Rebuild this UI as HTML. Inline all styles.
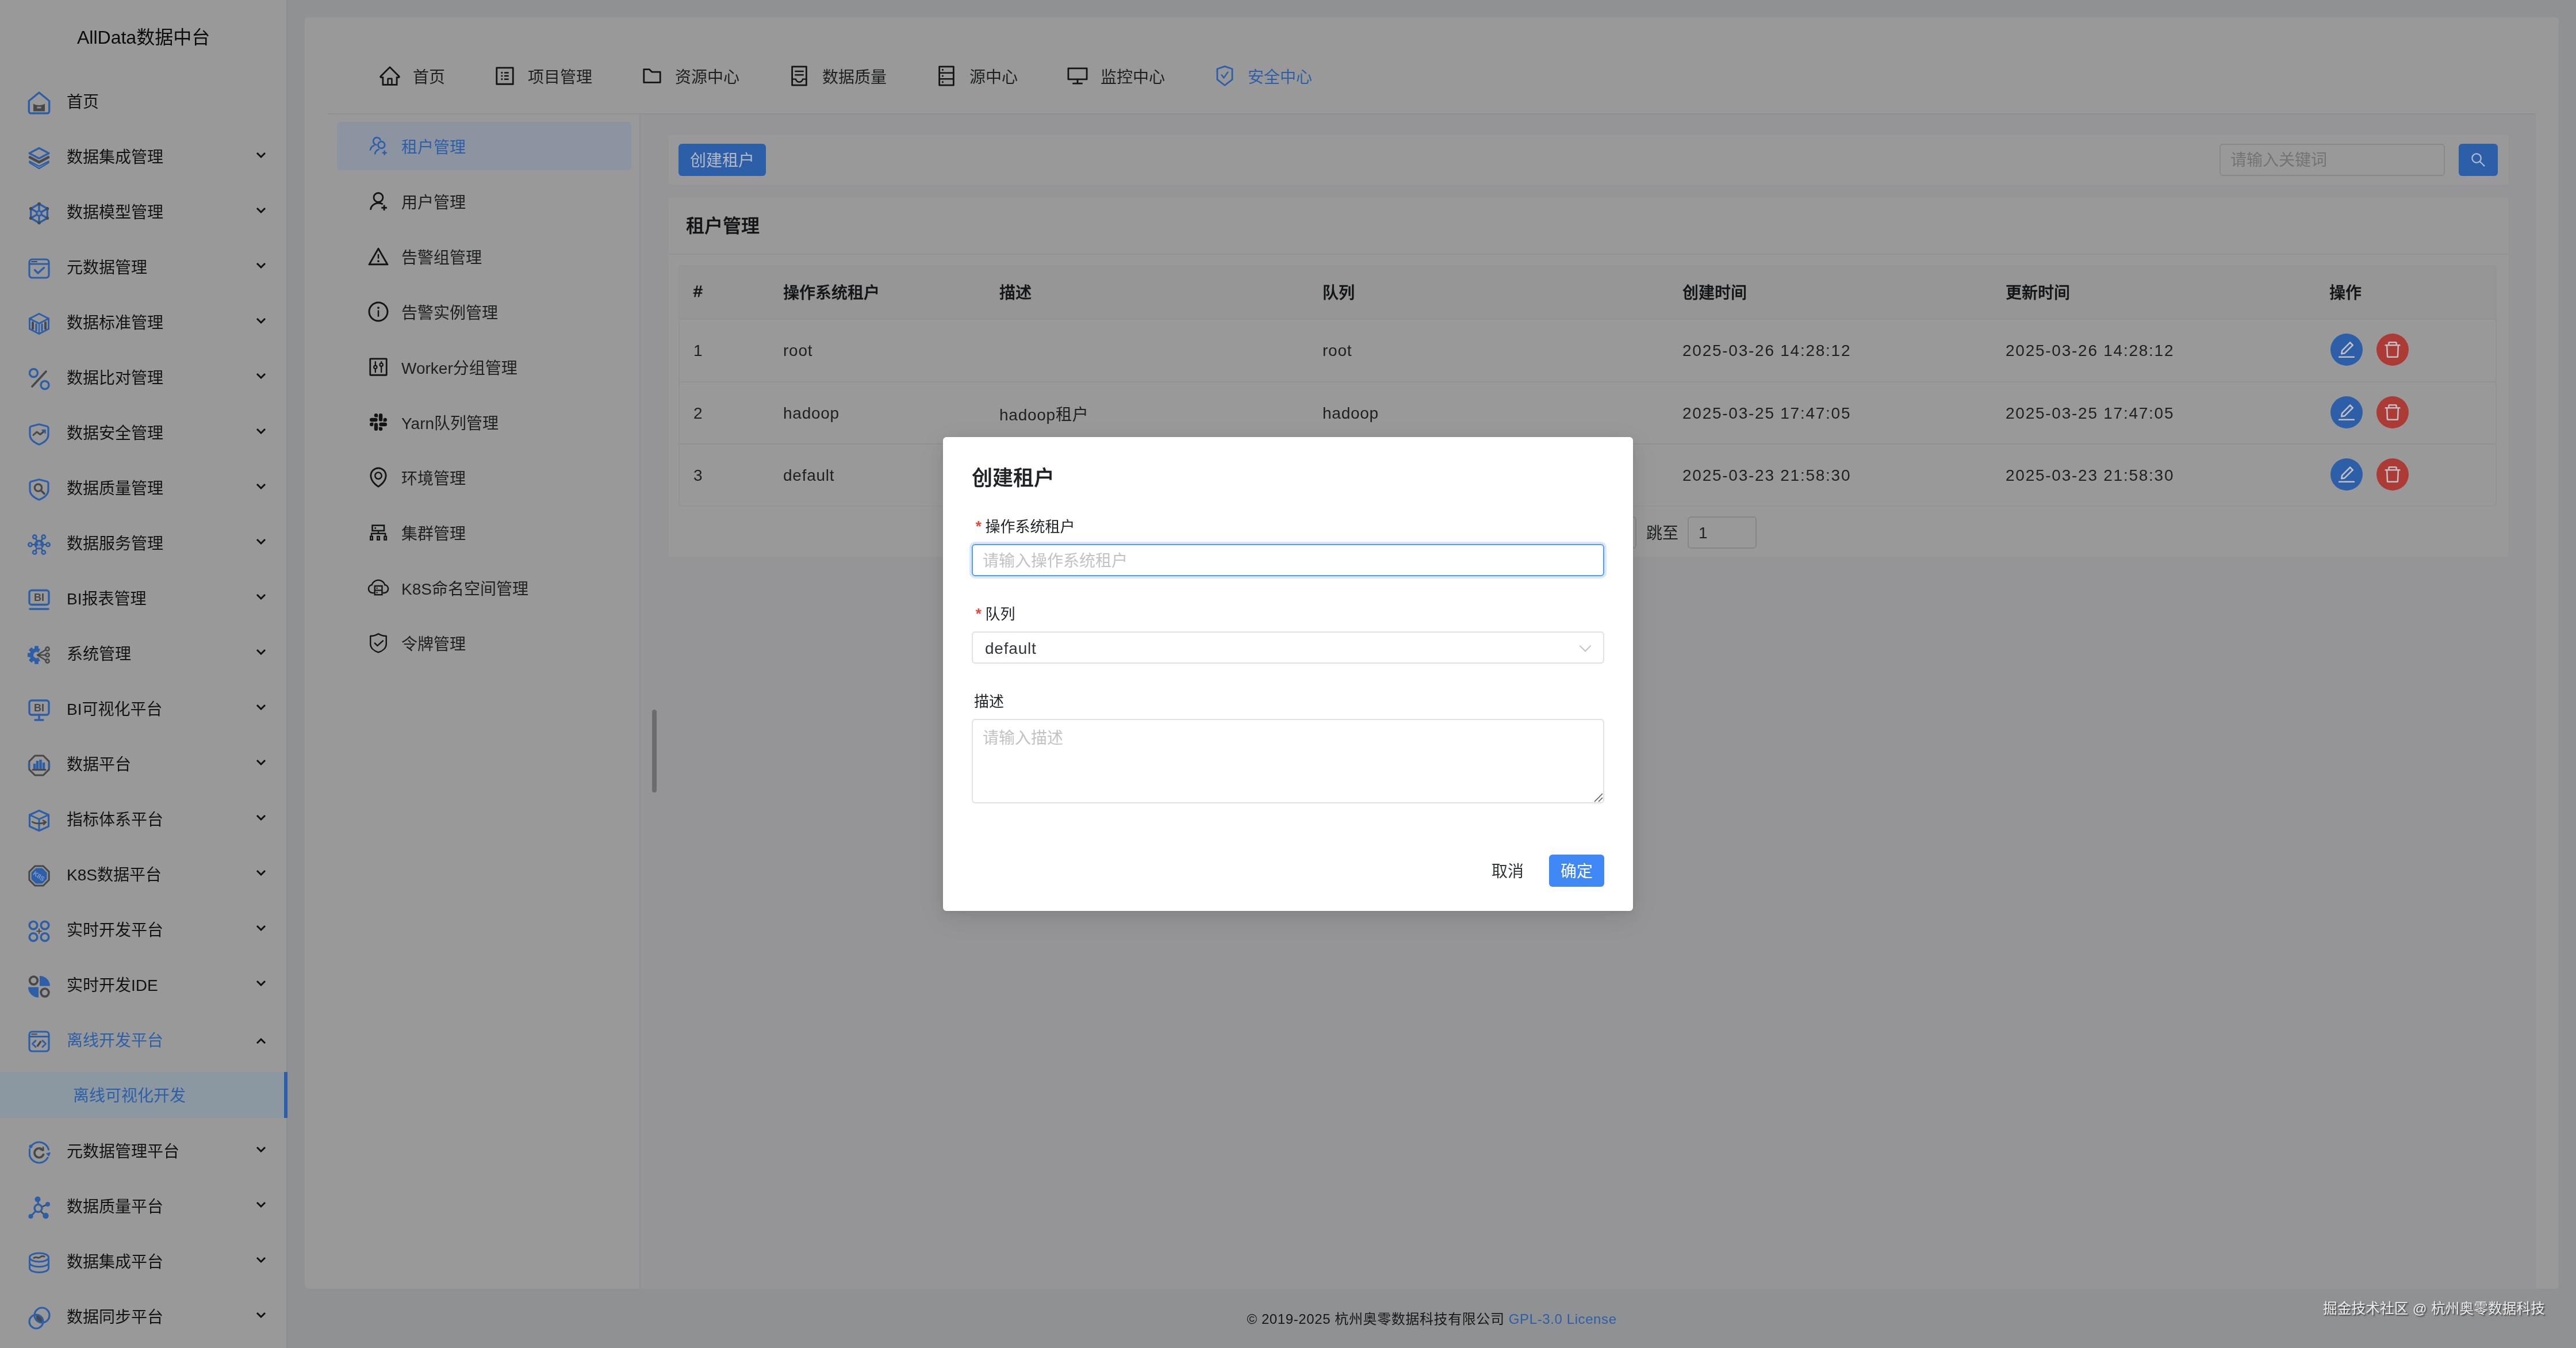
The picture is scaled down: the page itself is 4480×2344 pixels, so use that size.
<!DOCTYPE html>
<html lang="zh-CN"><head><meta charset="utf-8"><title>AllData数据中台</title><style>
*{box-sizing:border-box;margin:0;padding:0}
html,body{width:4480px;height:2344px;overflow:hidden}
body{background:#f0f2f5;font-family:"Liberation Sans","Noto Sans CJK SC",sans-serif;font-size:28px;color:#333639;position:relative}
#side{position:absolute;left:0;top:0;width:500px;height:2344px;background:#fff;border-right:2px solid #ececec}
#logo{position:absolute;left:0;top:0;width:500px;height:128px;line-height:130px;text-align:center;font-size:32px;color:#111}
.mi{position:absolute;left:0;width:500px;height:80px;line-height:84px;font-size:28px;color:rgba(0,0,0,.88);white-space:nowrap}
.mi .ic{position:absolute;left:48px;top:23px;width:40px;height:40px;z-index:5}
.mi span{position:absolute;left:116px;top:0}
.mi .arr{position:absolute;left:444px;top:31px;width:20px;height:14px}
.mi.open span,.mi.sel span{color:#2c5fa8;z-index:5}
.mi.sel{background:#8c98a1;z-index:5}
.mi.sel:after{content:"";position:absolute;right:0;top:0;width:6px;height:80px;background:#2c5fa8;z-index:5}
.mi.sel span{left:127px}
#card{position:absolute;left:530px;top:30px;width:3920px;height:2211px;background:#fff;border-radius:6px;overflow:hidden}
#nav{position:absolute;left:40px;top:40px;width:3840px;height:129px;border-bottom:2px solid #efeff5}
.ni{position:absolute;top:0;height:127px;line-height:129px;font-size:28px;color:#333639;white-space:nowrap}
.ni .ai{position:absolute;left:0;top:42px;width:40px;height:40px;color:#1f2225}
.ni span{position:absolute;left:60px;top:0}
.ni.act{z-index:5;color:#2c5fa8}
.ni.act .ai{color:#2c5fa8}
#subside{position:absolute;left:40px;top:169px;width:544px;height:2100px;border-right:2px solid #efeff5;background:#fff}
.si{position:absolute;left:16px;width:512px;height:84px;line-height:90px;font-size:28px;color:#333639;border-radius:6px;white-space:nowrap}
.si .ai{position:absolute;left:52px;top:22px;width:40px;height:40px;color:#1f2225}
.si span{position:absolute;left:112px;top:0}
.si.act{background:#8d94a1;z-index:5}
.si.act span,.si.act .ai{color:#2c5fa8;z-index:5}
#content{position:absolute;left:584px;top:169px;width:3296px;height:2100px;background:#f8f8fc}
#tbar{position:absolute;left:20px;top:1035px;width:8px;height:144px;border-radius:4px;background:#b4b4b8}
.ncard{position:absolute;left:46px;width:3204px;background:#fff;border:2px solid #f8f8fb;border-radius:6px}
#tool{top:34px;height:90px}
.btn{position:absolute;height:56px;line-height:60px;border-radius:6px;background:#4088f5;color:#fff;font-size:28px;text-align:center}
.btn.m{background:#2c5fa8;color:#b4b9c4;z-index:5}
#kw{position:absolute;left:2698px;top:15px;width:392px;height:56px;border:2px solid #e4e4ea;border-radius:6px;background:#fff;font-size:28px;line-height:54px;padding-left:17px;color:#c2c2c2}
#list{top:143px;height:628px}
#ltitle{position:absolute;left:31px;top:24px;font-size:32px;line-height:50px;font-weight:500;color:#1f2225;-webkit-text-stroke:.45px}
#lhr{position:absolute;left:0;top:97px;width:3200px;height:2px;background:#f3f3f7}
table{position:absolute;left:18px;top:117px;width:3162px;border-collapse:separate;border-spacing:0;table-layout:fixed;border:2px solid #f5f5f9;border-radius:6px;font-size:28px;overflow:hidden}
th{height:93px;background:#fafafc;font-weight:500;color:#1f2225;text-align:left;padding:0 24px 4px;border-bottom:2px solid #f3f3f7;white-space:nowrap;-webkit-text-stroke:.45px}
th:first-child{-webkit-text-stroke:.9px}
td{height:108.7px;padding:2px 24px 0;border-bottom:2px solid #f3f3f7;color:#333639;white-space:nowrap;position:relative;letter-spacing:.75px}
tr:last-child td{border-bottom:none;height:106px}
td.dt{letter-spacing:1.75px}
.cb{position:absolute;top:24px;width:56px;height:56px;border-radius:50%;color:#c2c0c4;z-index:5}
.cb .ai{position:absolute;left:10px;top:10px;width:36px;height:36px}
#footer{position:absolute;z-index:5;will-change:transform;left:500px;top:2241px;width:3980px;height:103px;line-height:106px;text-align:center;font-size:24px;color:#171717;letter-spacing:.6px}
#footer a{color:#2c5fa8;text-decoration:none}
#mask{position:absolute;left:0;top:0;width:4480px;height:2344px;background:rgba(0,0,0,.4);z-index:1}
#modal{position:absolute;z-index:10;left:1640px;top:760px;width:1200px;height:824px;background:#fff;border-radius:6px;box-shadow:0 6px 32px 0 rgba(0,0,0,.08),0 12px 56px 12px rgba(0,0,0,.05),0 3px 12px -4px rgba(0,0,0,.12)}
#mtitle{position:absolute;left:50px;top:43px;font-size:36px;line-height:58px;font-weight:500;color:#1f2225;-webkit-text-stroke:.4px}
.lab{position:absolute;left:54px;font-size:26px;line-height:36px;color:#1f2225;white-space:nowrap}
.lab b{color:#e5493d;font-weight:700;margin-right:4px;font-family:"Liberation Mono","DejaVu Sans Mono",monospace;font-size:26px}
.inp{position:absolute;left:50px;width:1100px;border:2px solid #e1e1e4;border-radius:6px;background:#fff;font-size:28px;padding-left:17px;color:#c2c2c2}
.t,.mi span,.ni span,.si span,#ltitle,#mtitle,.lab,#wm,.mi .ic{will-change:transform}
.t{display:inline-block}
#wm{letter-spacing:.27px;position:absolute;z-index:11;left:4040px;top:2256px;font-size:24.500px;line-height:40px;color:#ececec;text-shadow:2px 2px 2px rgba(0,0,0,.55);white-space:nowrap}
</style></head>
<body>
<div id="side"><div id="logo"><span class="t">AllData数据中台</span></div><div class="mi" style="top:136px"><svg class="ic" viewBox="0 0 40 40" fill="none" stroke-linecap="round" stroke-linejoin="round"><path d="M2.300 16.500 L20 2 L37.700 16.500 V34.500 a3.500 3.500 0 0 1 -3.500 3.500 H5.800 a3.500 3.500 0 0 1 -3.500 -3.500 Z" stroke="#2c5fa8" stroke-width="3.400"/><path d="M10 21 C 13 25 27 25 30 21 V34.500 H10 Z" fill="#484848" stroke="none"/><rect x="16.300" y="26.500" width="7.400" height="3" fill="#8c8c8c"/></svg><span>首页</span></div><div class="mi" style="top:232px"><svg class="ic" viewBox="0 0 40 40" fill="none" stroke-linecap="round" stroke-linejoin="round"><path d="M20 2.500 L37 11.500 L20 20.500 L3 11.500 Z" stroke="#2c5fa8" stroke-width="3.200"/><path d="M4 18.500 L20 27 L36 18.500" stroke="#484848" stroke-width="4.600"/><path d="M3.500 25.500 L20 34 L36.500 25.500 V28 L20 38 L3.500 28 Z" stroke="#2c5fa8" stroke-width="2.400"/></svg><span>数据集成管理</span><svg class="arr" viewBox="0 0 20 14" fill="none" stroke="#1a1a1a" stroke-width="3"><polyline points="3,3 10,10 17,3"/></svg></div><div class="mi" style="top:328px"><svg class="ic" viewBox="0 0 40 40" fill="none" stroke-linecap="round" stroke-linejoin="round"><g stroke="#2c5fa8" stroke-width="3.400"><path d="M20.0 3.5 L5.7 11.8 L5.7 28.2 L20.0 36.5 L34.3 28.3 L34.3 11.8Z"/><path d="M20 20 L20.0 3.5"/><path d="M20 20 L5.7 11.8"/><path d="M20 20 L5.7 28.2"/><path d="M20 20 L20.0 36.5"/><path d="M20 20 L34.3 28.3"/><path d="M20 20 L34.3 11.8"/></g><circle cx="20" cy="20" r="4.200" fill="#8e8e90" stroke="#2c5fa8" stroke-width="3"/><circle cx="20.0" cy="3.5" r="2.800" fill="#484848" stroke="none"/><circle cx="5.7" cy="11.8" r="2.800" fill="#484848" stroke="none"/><circle cx="5.7" cy="28.2" r="2.800" fill="#484848" stroke="none"/><circle cx="20.0" cy="36.5" r="2.800" fill="#484848" stroke="none"/><circle cx="34.3" cy="28.3" r="2.800" fill="#484848" stroke="none"/><circle cx="34.3" cy="11.8" r="2.800" fill="#484848" stroke="none"/></svg><span>数据模型管理</span><svg class="arr" viewBox="0 0 20 14" fill="none" stroke="#1a1a1a" stroke-width="3"><polyline points="3,3 10,10 17,3"/></svg></div><div class="mi" style="top:424px"><svg class="ic" viewBox="0 0 40 40" fill="none" stroke-linecap="round" stroke-linejoin="round"><rect x="3" y="4" width="34" height="32" rx="5" stroke="#2c5fa8" stroke-width="3.200"/><path d="M4 12 H36" stroke="#2c5fa8" stroke-width="3"/><path d="M7 8 H16" stroke="#484848" stroke-width="2"/><path d="M12.500 22.500 L18 28 L28.500 18.500" stroke="#2c5fa8" stroke-width="3.400"/></svg><span>元数据管理</span><svg class="arr" viewBox="0 0 20 14" fill="none" stroke="#1a1a1a" stroke-width="3"><polyline points="3,3 10,10 17,3"/></svg></div><div class="mi" style="top:520px"><svg class="ic" viewBox="0 0 40 40" fill="none" stroke-linecap="round" stroke-linejoin="round"><path d="M20 2.500 L36.500 11 V29 L20 37.500 L3.500 29 V11 Z" stroke="#2c5fa8" stroke-width="3"/><path d="M3.500 11 L20 19.500 L36.500 11" stroke="#2c5fa8" stroke-width="3"/><path d="M9 18 V28.500" stroke="#484848" stroke-width="4"/><path d="M15 21 V31.500" stroke="#2c5fa8" stroke-width="3.400"/><path d="M25 21 V31.500" stroke="#2c5fa8" stroke-width="3.400"/><path d="M31 18 V28.500" stroke="#484848" stroke-width="4"/><path d="M20 20 V37" stroke="#2c5fa8" stroke-width="2.400"/></svg><span>数据标准管理</span><svg class="arr" viewBox="0 0 20 14" fill="none" stroke="#1a1a1a" stroke-width="3"><polyline points="3,3 10,10 17,3"/></svg></div><div class="mi" style="top:616px"><svg class="ic" viewBox="0 0 40 40" fill="none" stroke-linecap="round" stroke-linejoin="round"><circle cx="10.500" cy="9.500" r="7" stroke="#2c5fa8" stroke-width="3.400"/><circle cx="30" cy="30.500" r="7" stroke="#2c5fa8" stroke-width="3.400"/><path d="M32 7 L8 33" stroke="#484848" stroke-width="3.600"/></svg><span>数据比对管理</span><svg class="arr" viewBox="0 0 20 14" fill="none" stroke="#1a1a1a" stroke-width="3"><polyline points="3,3 10,10 17,3"/></svg></div><div class="mi" style="top:712px"><svg class="ic" viewBox="0 0 40 40" fill="none" stroke-linecap="round" stroke-linejoin="round"><path d="M20 2.800 L33.500 6.200 Q36 6.800 36 9.500 V21 C36 29 28.500 34.500 20 38 C11.500 34.500 4 29 4 21 V9.500 Q4 6.800 6.500 6.200 Z" stroke="#2c5fa8" stroke-width="3.200"/><path d="M10 21.500 L16 16 L22 20.500 L30 13.500" stroke="#484848" stroke-width="3"/><path d="M25.500 13 H30.500 V18" stroke="#2c5fa8" stroke-width="2.600"/></svg><span>数据安全管理</span><svg class="arr" viewBox="0 0 20 14" fill="none" stroke="#1a1a1a" stroke-width="3"><polyline points="3,3 10,10 17,3"/></svg></div><div class="mi" style="top:808px"><svg class="ic" viewBox="0 0 40 40" fill="none" stroke-linecap="round" stroke-linejoin="round"><path d="M20 2.800 L33.500 6.200 Q36 6.800 36 9.500 V21 C36 29 28.500 34.500 20 38 C11.500 34.500 4 29 4 21 V9.500 Q4 6.800 6.500 6.200 Z" stroke="#2c5fa8" stroke-width="3.200"/><circle cx="18.500" cy="17" r="6.200" stroke="#484848" stroke-width="3.200"/><path d="M23.500 22 L29 27.500" stroke="#484848" stroke-width="3.600"/></svg><span>数据质量管理</span><svg class="arr" viewBox="0 0 20 14" fill="none" stroke="#1a1a1a" stroke-width="3"><polyline points="3,3 10,10 17,3"/></svg></div><div class="mi" style="top:904px"><svg class="ic" viewBox="0 0 40 40" fill="none" stroke-linecap="round" stroke-linejoin="round"><path d="M20 20 L35.5 20.0" stroke="#484848" stroke-width="2.200"/><path d="M20 20 L27.8 6.6" stroke="#484848" stroke-width="2.200"/><path d="M20 20 L12.3 6.6" stroke="#484848" stroke-width="2.200"/><path d="M20 20 L4.5 20.0" stroke="#484848" stroke-width="2.200"/><path d="M20 20 L12.2 33.4" stroke="#484848" stroke-width="2.200"/><path d="M20 20 L27.8 33.4" stroke="#484848" stroke-width="2.200"/><circle cx="35.5" cy="20.0" r="3.200" stroke="#2c5fa8" stroke-width="2.600" fill="#8a90a0"/><circle cx="27.8" cy="6.6" r="3.200" stroke="#2c5fa8" stroke-width="2.600" fill="#8a90a0"/><circle cx="12.3" cy="6.6" r="3.200" stroke="#2c5fa8" stroke-width="2.600" fill="#8a90a0"/><circle cx="4.5" cy="20.0" r="3.200" stroke="#2c5fa8" stroke-width="2.600" fill="#8a90a0"/><circle cx="12.2" cy="33.4" r="3.200" stroke="#2c5fa8" stroke-width="2.600" fill="#8a90a0"/><circle cx="27.8" cy="33.4" r="3.200" stroke="#2c5fa8" stroke-width="2.600" fill="#8a90a0"/><circle cx="20" cy="20" r="8.500" fill="#2c5fa8" stroke="none"/><circle cx="20" cy="17.500" r="2.600" fill="#8a90a0" stroke="none"/><path d="M15.500 25.500 a4.500 4.500 0 0 1 9 0Z" fill="#8a90a0" stroke="none"/></svg><span>数据服务管理</span><svg class="arr" viewBox="0 0 20 14" fill="none" stroke="#1a1a1a" stroke-width="3"><polyline points="3,3 10,10 17,3"/></svg></div><div class="mi" style="top:1000px"><svg class="ic" viewBox="0 0 40 40" fill="none" stroke-linecap="round" stroke-linejoin="round"><rect x="3" y="3.500" width="34" height="25" rx="4" stroke="#2c5fa8" stroke-width="3.400"/><text x="20" y="22" text-anchor="middle" font-family="Liberation Sans, sans-serif" font-weight="bold" font-size="18" fill="#484848" stroke="none">BI</text><path d="M4 36 H36" stroke="#2c5fa8" stroke-width="3.600"/></svg><span>BI报表管理</span><svg class="arr" viewBox="0 0 20 14" fill="none" stroke="#1a1a1a" stroke-width="3"><polyline points="3,3 10,10 17,3"/></svg></div><div class="mi" style="top:1096px"><svg class="ic" viewBox="0 0 40 40" fill="none" stroke-linecap="round" stroke-linejoin="round"><defs><clipPath id="gc"><path d="M-2 -2 H27 L17 20 L27 42 H-2 Z"/></clipPath></defs><g clip-path="url(#gc)"><rect x="-3.400" y="-15.800" width="6.800" height="6" rx="1" transform="translate(15.500 20) rotate(0)" fill="#2c5fa8" stroke="none"/><rect x="-3.400" y="-15.800" width="6.800" height="6" rx="1" transform="translate(15.500 20) rotate(45)" fill="#2c5fa8" stroke="none"/><rect x="-3.400" y="-15.800" width="6.800" height="6" rx="1" transform="translate(15.500 20) rotate(90)" fill="#2c5fa8" stroke="none"/><rect x="-3.400" y="-15.800" width="6.800" height="6" rx="1" transform="translate(15.500 20) rotate(135)" fill="#2c5fa8" stroke="none"/><rect x="-3.400" y="-15.800" width="6.800" height="6" rx="1" transform="translate(15.500 20) rotate(180)" fill="#2c5fa8" stroke="none"/><rect x="-3.400" y="-15.800" width="6.800" height="6" rx="1" transform="translate(15.500 20) rotate(225)" fill="#2c5fa8" stroke="none"/><rect x="-3.400" y="-15.800" width="6.800" height="6" rx="1" transform="translate(15.500 20) rotate(270)" fill="#2c5fa8" stroke="none"/><rect x="-3.400" y="-15.800" width="6.800" height="6" rx="1" transform="translate(15.500 20) rotate(315)" fill="#2c5fa8" stroke="none"/><circle cx="15.500" cy="20" r="8.600" stroke="#2c5fa8" stroke-width="6.400"/></g><path d="M17 20 L33 10 M17 20 L33 20 M17 20 L33 30" stroke="#484848" stroke-width="2.600"/><circle cx="34.500" cy="9.500" r="3.200" stroke="#484848" stroke-width="2.400" fill="#8e8e90"/><circle cx="34.500" cy="20" r="3.200" stroke="#484848" stroke-width="2.400" fill="#8e8e90"/><circle cx="34.500" cy="30.500" r="3.200" stroke="#484848" stroke-width="2.400" fill="#8e8e90"/></svg><span>系统管理</span><svg class="arr" viewBox="0 0 20 14" fill="none" stroke="#1a1a1a" stroke-width="3"><polyline points="3,3 10,10 17,3"/></svg></div><div class="mi" style="top:1192px"><svg class="ic" viewBox="0 0 40 40" fill="none" stroke-linecap="round" stroke-linejoin="round"><rect x="3" y="3" width="34" height="25" rx="4" stroke="#2c5fa8" stroke-width="3.400"/><text x="20" y="21.5" text-anchor="middle" font-family="Liberation Sans, sans-serif" font-weight="bold" font-size="18" fill="#484848" stroke="none">BI</text><path d="M20 28 V36 M13 37 H27" stroke="#2c5fa8" stroke-width="3.400"/></svg><span>BI可视化平台</span><svg class="arr" viewBox="0 0 20 14" fill="none" stroke="#1a1a1a" stroke-width="3"><polyline points="3,3 10,10 17,3"/></svg></div><div class="mi" style="top:1288px"><svg class="ic" viewBox="0 0 40 40" fill="none" stroke-linecap="round" stroke-linejoin="round"><path d="M37.1 12.9 L27.1 2.9 L12.9 2.9 L2.9 12.9 L2.9 27.1 L12.9 37.1 L27.1 37.1 L37.1 27.1Z" stroke="#484848" stroke-width="3"/><path d="M2.500 17 V23 M37.500 17 V23" stroke="#2c5fa8" stroke-width="3.400"/><path d="M12 26 V17 M17 26 V12 M22.500 26 V10 M28 26 V15" stroke="#2c5fa8" stroke-width="4.400" stroke-linecap="butt"/><path d="M9 27.500 H31" stroke="#484848" stroke-width="2.800"/></svg><span>数据平台</span><svg class="arr" viewBox="0 0 20 14" fill="none" stroke="#1a1a1a" stroke-width="3"><polyline points="3,3 10,10 17,3"/></svg></div><div class="mi" style="top:1384px"><svg class="ic" viewBox="0 0 40 40" fill="none" stroke-linecap="round" stroke-linejoin="round"><path d="M20 2.500 L36.500 10 V30 L20 37.500 L3.500 30 V10 Z" stroke="#2c5fa8" stroke-width="3.200"/><path d="M3.500 10 L20 17.500 L36.500 10 M20 17.500 V37" stroke="#2c5fa8" stroke-width="3"/><path d="M8 22 C 14 26 24 26 31 22.500" stroke="#484848" stroke-width="2.600"/><path d="M27 19.500 L32 22.500 L28 26.500" stroke="#484848" stroke-width="2.600"/></svg><span>指标体系平台</span><svg class="arr" viewBox="0 0 20 14" fill="none" stroke="#1a1a1a" stroke-width="3"><polyline points="3,3 10,10 17,3"/></svg></div><div class="mi" style="top:1480px"><svg class="ic" viewBox="0 0 40 40" fill="none" stroke-linecap="round" stroke-linejoin="round"><path d="M37.1 12.9 L27.1 2.9 L12.9 2.9 L2.9 12.9 L2.9 27.1 L12.9 37.1 L27.1 37.1 L37.1 27.1Z" stroke="#484848" stroke-width="3"/><path d="M32.5 14.8 L25.2 7.5 L14.8 7.5 L7.5 14.8 L7.5 25.2 L14.8 32.5 L25.2 32.5 L32.5 25.2Z" fill="#2c5fa8" stroke="#2c5fa8" stroke-width="2"/><text x="20" y="24.500" text-anchor="middle" transform="rotate(35 20 20)" font-family="Liberation Sans, sans-serif" font-weight="bold" font-size="11" fill="#7f9bc8" stroke="none">K8S</text></svg><span>K8S数据平台</span><svg class="arr" viewBox="0 0 20 14" fill="none" stroke="#1a1a1a" stroke-width="3"><polyline points="3,3 10,10 17,3"/></svg></div><div class="mi" style="top:1576px"><svg class="ic" viewBox="0 0 40 40" fill="none" stroke-linecap="round" stroke-linejoin="round"><circle cx="10" cy="10" r="6.800" stroke="#2c5fa8" stroke-width="3.600"/><circle cx="30" cy="10" r="6.800" stroke="#2c5fa8" stroke-width="3.600"/><circle cx="10" cy="30.5" r="6.800" stroke="#2c5fa8" stroke-width="3.600"/><circle cx="30" cy="30.5" r="6.800" stroke="#2c5fa8" stroke-width="3.600"/><path d="M20 16.500 V24 M16.200 20.200 H23.800" stroke="#484848" stroke-width="2"/></svg><span>实时开发平台</span><svg class="arr" viewBox="0 0 20 14" fill="none" stroke="#1a1a1a" stroke-width="3"><polyline points="3,3 10,10 17,3"/></svg></div><div class="mi" style="top:1672px"><svg class="ic" viewBox="0 0 40 40" fill="none" stroke-linecap="round" stroke-linejoin="round"><circle cx="10.500" cy="10" r="6.800" stroke="#484848" stroke-width="3.800"/><circle cx="30" cy="31" r="6.800" stroke="#484848" stroke-width="3.800"/><path d="M21 2 A18 18 0 0 1 39 19.500 H21 Z" fill="#2c5fa8" stroke="none"/><path d="M1 21.500 H19 V39.500 A18 18 0 0 1 1 21.500 Z" fill="#2c5fa8" stroke="none"/></svg><span>实时开发IDE</span><svg class="arr" viewBox="0 0 20 14" fill="none" stroke="#1a1a1a" stroke-width="3"><polyline points="3,3 10,10 17,3"/></svg></div><div class="mi open" style="top:1768px"><svg class="ic" viewBox="0 0 40 40" fill="none" stroke-linecap="round" stroke-linejoin="round"><rect x="3" y="3" width="34" height="34" rx="5" stroke="#2c5fa8" stroke-width="3.200"/><path d="M4 11.500 H36" stroke="#2c5fa8" stroke-width="2.800"/><path d="M7 7.300 H16" stroke="#484848" stroke-width="2"/><path d="M14 18.500 L8.500 24 L14 29.500 M26 18.500 L31.500 24 L26 29.500" stroke="#2c5fa8" stroke-width="3"/><path d="M22.500 20.500 L17.500 27.500" stroke="#484848" stroke-width="3.400"/></svg><span>离线开发平台</span><svg class="arr" viewBox="0 0 20 14" fill="none" stroke="#1a1a1a" stroke-width="3" style="top:35px"><polyline points="3,11 10,4 17,11"/></svg></div><div class="mi sel" style="top:1864px"><span>离线可视化开发</span></div><div class="mi" style="top:1961px"><svg class="ic" viewBox="0 0 40 40" fill="none" stroke-linecap="round" stroke-linejoin="round"><path d="M5 11 A17 17 0 0 1 36.500 15" stroke="#2c5fa8" stroke-width="3"/><path d="M35 29 A17 17 0 0 1 3.500 25 V 14" stroke="#2c5fa8" stroke-width="3"/><circle cx="5.500" cy="9.500" r="3" fill="#2c5fa8" stroke="none"/><path d="M33 22 L37 26 L39 20.500Z" fill="#2c5fa8" stroke="#2c5fa8" stroke-width="1.500"/><path d="M26.500 16 A8 8 0 1 0 27.500 23.500" stroke="#484848" stroke-width="3.600"/><path d="M22.500 15 L27.500 16 L27 11" stroke="#484848" stroke-width="2.400"/></svg><span>元数据管理平台</span><svg class="arr" viewBox="0 0 20 14" fill="none" stroke="#1a1a1a" stroke-width="3"><polyline points="3,3 10,10 17,3"/></svg></div><div class="mi" style="top:2057px"><svg class="ic" viewBox="0 0 40 40" fill="none" stroke-linecap="round" stroke-linejoin="round"><path d="M18.500 14 L17.500 6 M24 19 L34 14.500 M14 26 L6 34.500 M23 26.500 L31 34" stroke="#484848" stroke-width="2.600"/><path d="M18.500 14 L17.500 6 M14 26 L6 34.500" stroke="#2c5fa8" stroke-width="2.600"/><circle cx="18.500" cy="21" r="6.500" stroke="#2c5fa8" stroke-width="3.400"/><circle cx="17.500" cy="5.500" r="5" fill="#2c5fa8" stroke="none"/><circle cx="35" cy="14" r="4" fill="#2c5fa8" stroke="none"/><circle cx="5.500" cy="35" r="4" fill="#2c5fa8" stroke="none"/><circle cx="31.500" cy="34" r="5.200" fill="#2c5fa8" stroke="none"/></svg><span>数据质量平台</span><svg class="arr" viewBox="0 0 20 14" fill="none" stroke="#1a1a1a" stroke-width="3"><polyline points="3,3 10,10 17,3"/></svg></div><div class="mi" style="top:2153px"><svg class="ic" viewBox="0 0 40 40" fill="none" stroke-linecap="round" stroke-linejoin="round"><ellipse cx="20" cy="10.500" rx="16.500" ry="7.500" stroke="#2c5fa8" stroke-width="3"/><path d="M3.500 11 V29 C3.500 39 36.500 39 36.500 29 V11" stroke="#2c5fa8" stroke-width="3"/><path d="M3.500 19.500 C3.500 29 36.500 29 36.500 19.500" stroke="#2c5fa8" stroke-width="3"/><path d="M3.500 27 C3.500 28 3.500 28 3.500 28" stroke="#2c5fa8" stroke-width="3"/><path d="M11 11.500 C 15 7.500 18 13.500 22 10 S 28 8.500 29 9" stroke="#484848" stroke-width="2.800"/></svg><span>数据集成平台</span><svg class="arr" viewBox="0 0 20 14" fill="none" stroke="#1a1a1a" stroke-width="3"><polyline points="3,3 10,10 17,3"/></svg></div><div class="mi" style="top:2249px"><svg class="ic" viewBox="0 0 40 40" fill="none" stroke-linecap="round" stroke-linejoin="round"><path d="M15 14 C 21 12 27 19 25.500 27 C 19 29 13 22 15 14 Z" fill="#484848" stroke="none"/><circle cx="25" cy="15" r="13" stroke="#2c5fa8" stroke-width="3.200"/><circle cx="15" cy="26" r="12" stroke="#2c5fa8" stroke-width="3.200"/></svg><span>数据同步平台</span><svg class="arr" viewBox="0 0 20 14" fill="none" stroke="#1a1a1a" stroke-width="3"><polyline points="3,3 10,10 17,3"/></svg></div></div>
<div id="card"><div id="nav"><div class="ni" style="left:88px"><svg class="ai" viewBox="0 0 1024 1024" fill="currentColor" ><path d="M946.5 505L560.1 118.8l-25.9-25.9a31.500 31.500 0 0 0-44.400 0L77.500 505a63.900 63.900 0 0 0-18.800 46c.4 35.200 29.700 63.300 64.900 63.300h42.500V940h691.800V614.300h43.400c17.100 0 33.200-6.700 45.300-18.800a63.600 63.600 0 0 0 18.700-45.300c0-17-6.700-33.100-18.800-45.200zM568 868H456V664h112v204zm217.900-325.700V868H632V640c0-22.100-17.900-40-40-40H432c-22.100 0-40 17.900-40 40v228H238.100V542.300h-96l370-369.700 23.100 23.100L882 542.300h-96.100z"/></svg><span>首页</span></div><div class="ni" style="left:288px"><svg class="ai" viewBox="0 0 1024 1024" fill="currentColor" ><path d="M880 112H144c-17.700 0-32 14.300-32 32v736c0 17.700 14.300 32 32 32h736c17.700 0 32-14.300 32-32V144c0-17.700-14.300-32-32-32zm-40 728H184V184h656v656zM492 400h184c4.400 0 8-3.600 8-8v-48c0-4.400-3.600-8-8-8H492c-4.400 0-8 3.600-8 8v48c0 4.400 3.600 8 8 8zm0 144h184c4.400 0 8-3.600 8-8v-48c0-4.400-3.600-8-8-8H492c-4.400 0-8 3.600-8 8v48c0 4.400 3.600 8 8 8zm0 144h184c4.400 0 8-3.600 8-8v-48c0-4.400-3.600-8-8-8H492c-4.400 0-8 3.600-8 8v48c0 4.400 3.600 8 8 8zM340 368a40 40 0 1 0 80 0 40 40 0 1 0-80 0zm0 144a40 40 0 1 0 80 0 40 40 0 1 0-80 0zm0 144a40 40 0 1 0 80 0 40 40 0 1 0-80 0z"/></svg><span>项目管理</span></div><div class="ni" style="left:544px"><svg class="ai" viewBox="0 0 1024 1024" fill="currentColor" ><path d="M880 298.400H521L403.700 186.200a8.150 8.150 0 0 0-5.500-2.200H144c-17.700 0-32 14.300-32 32v592c0 17.700 14.300 32 32 32h736c17.700 0 32-14.300 32-32V330.400c0-17.700-14.300-32-32-32zM840 768H184V256h188.500l119.600 114.400H840V768z"/></svg><span>资源中心</span></div><div class="ni" style="left:800px"><svg class="ai" viewBox="0 0 1024 1024" fill="currentColor" ><path d="M832 64H192c-17.700 0-32 14.300-32 32v832c0 17.700 14.300 32 32 32h640c17.700 0 32-14.300 32-32V96c0-17.700-14.300-32-32-32zm-40 824H232V687h97.900c11.600 32.800 32 62.300 59.100 84.700 34.500 28.500 78.200 44.300 123 44.300s88.500-15.700 123-44.300c27.100-22.400 47.500-51.900 59.100-84.700H792v201zm0-264H643.600l-5.200 24.700C626.400 708.500 573.200 752 512 752s-114.400-43.500-126.500-103.300l-5.200-24.700H232V136h560v488zM320 341h384c4.400 0 8-3.600 8-8v-48c0-4.400-3.600-8-8-8H320c-4.400 0-8 3.600-8 8v48c0 4.400 3.600 8 8 8zm0 160h384c4.400 0 8-3.600 8-8v-48c0-4.400-3.600-8-8-8H320c-4.400 0-8 3.600-8 8v48c0 4.400 3.600 8 8 8z"/></svg><span>数据质量</span></div><div class="ni" style="left:1056px"><svg class="ai" viewBox="0 0 1024 1024" fill="currentColor" ><path d="M832 64H192c-17.700 0-32 14.300-32 32v832c0 17.700 14.300 32 32 32h640c17.700 0 32-14.300 32-32V96c0-17.700-14.300-32-32-32zm-600 72h560v208H232V136zm560 480H232V408h560v208zm0 272H232V680h560v208zM304 240a40 40 0 1 0 80 0 40 40 0 1 0-80 0zm0 272a40 40 0 1 0 80 0 40 40 0 1 0-80 0zm0 272a40 40 0 1 0 80 0 40 40 0 1 0-80 0z"/></svg><span>源中心</span></div><div class="ni" style="left:1284px"><svg class="ai" viewBox="0 0 1024 1024" fill="currentColor" ><path d="M928 140H96c-17.700 0-32 14.300-32 32v496c0 17.700 14.300 32 32 32h380v112H304c-8.800 0-16 7.200-16 16v48c0 4.400 3.600 8 8 8h432c4.400 0 8-3.600 8-8v-48c0-8.800-7.200-16-16-16H548V700h380c17.700 0 32-14.300 32-32V172c0-17.700-14.300-32-32-32zm-40 488H136V212h752v416z"/></svg><span>监控中心</span></div><div class="ni act" style="left:1540px"><svg class="ai" viewBox="0 0 1024 1024" fill="currentColor" ><path d="M866.900 169.900L527.100 54.100C523 52.700 517.500 52 512 52s-11 .7-15.100 2.100L157.100 169.900c-8.300 2.800-15.100 12.400-15.100 21.200v482.400c0 8.800 5.700 20.400 12.600 25.900L499.300 968c3.500 2.700 8 4.100 12.600 4.100s9.200-1.400 12.600-4.100l344.700-268.600c6.900-5.400 12.600-17 12.600-25.900V191.100c.2-8.800-6.600-18.300-14.900-21.200zM810 654.300L512 886.500 214 654.300V226.700l298-101.600 298 101.600v427.600zm-405.800-201c-3-4.100-7.800-6.600-13-6.600H336c-6.500 0-10.300 7.400-6.500 12.700l126.400 174a16.100 16.100 0 0 0 26 0l212.600-292.700c3.800-5.300 0-12.700-6.500-12.700h-55.200c-5.100 0-10 2.500-13 6.600L468.900 542.400l-64.700-89.100z"/></svg><span>安全中心</span></div></div><div id="subside"><div class="si act" style="top:13px"><svg class="ai" viewBox="0 0 1024 1024" fill="none" stroke="currentColor" stroke-width="72" stroke-linecap="butt" stroke-linejoin="miter"><circle cx="648" cy="462" r="150" stroke-width="68"/><path d="M360 884 C 365 780 430 690 548 652" stroke-width="68"/><path d="M682 811 H890 M786 707 V915" stroke-width="62"/><path d="M451 460 A165 165 0 1 1 613 266" stroke-width="68"/><path d="M147 708 C 160 600 230 512 342 476" stroke-width="68"/></svg><span>租户管理</span></div><div class="si" style="top:109px"><svg class="ai" viewBox="0 0 1024 1024" fill="none" stroke="currentColor" stroke-width="72" stroke-linecap="butt" stroke-linejoin="miter"><circle cx="511" cy="344" r="204"/><path d="M165 892 C 175 740 300 615 480 590 C 570 585 650 605 712 640"/><path d="M650 800 H892 M771 679 V921"/></svg><span>用户管理</span></div><div class="si" style="top:205px"><svg class="ai" viewBox="0 0 1024 1024" fill="currentColor" ><path d="M464 720a48 48 0 1 0 96 0 48 48 0 1 0-96 0zm16-304v184c0 4.400 3.600 8 8 8h48c4.400 0 8-3.600 8-8V416c0-4.400-3.600-8-8-8h-48c-4.400 0-8 3.600-8 8zm475.700 440l-416-720c-6.200-10.700-16.900-16-27.700-16s-21.600 5.300-27.700 16l-416 720C56 877.400 71.400 904 96 904h832c24.600 0 40-26.600 27.700-48zm-783.500-27.900L512 239.900l339.800 588.200H172.200z"/></svg><span>告警组管理</span></div><div class="si" style="top:301px"><svg class="ai" viewBox="0 0 1024 1024" fill="currentColor" ><path d="M512 64C264.600 64 64 264.600 64 512s200.600 448 448 448 448-200.600 448-448S759.400 64 512 64zm0 820c-205.400 0-372-166.600-372-372s166.600-372 372-372 372 166.600 372 372-166.600 372-372 372z"/><path d="M464 336a48 48 0 1 0 96 0 48 48 0 1 0-96 0zm72 112h-48c-4.400 0-8 3.600-8 8v272c0 4.400 3.600 8 8 8h48c4.400 0 8-3.600 8-8V456c0-4.400-3.600-8-8-8z"/></svg><span>告警实例管理</span></div><div class="si" style="top:397px"><svg class="ai" viewBox="0 0 1024 1024" fill="none" stroke="currentColor" stroke-width="72" stroke-linecap="butt" stroke-linejoin="miter"><rect x="148" y="148" width="728" height="728" rx="10"/><path d="M380 260 V440 M380 600 V770 M644 260 V330 M644 500 V770" stroke-width="60"/><circle cx="380" cy="520" r="70" stroke-width="56"/><circle cx="644" cy="415" r="70" stroke-width="56"/></svg><span>Worker分组管理</span></div><div class="si" style="top:493px"><svg class="ai" viewBox="0 0 1024 1024"><g fill="currentColor" stroke="none"><rect x="534" y="128" width="164" height="350" rx="82"/><rect x="128" y="326" width="350" height="164" rx="82"/><rect x="326" y="546" width="164" height="350" rx="82"/><rect x="546" y="534" width="350" height="164" rx="82"/><path d="M490 292 h-82 a82 82 0 1 1 82 -82 z"/><path d="M732 490 v-82 a82 82 0 1 1 82 82 z"/><path d="M534 732 h82 a82 82 0 1 1 -82 82 z"/><path d="M292 534 v82 a82 82 0 1 1 -82 -82 z"/></g></svg><span>Yarn队列管理</span></div><div class="si" style="top:589px"><svg class="ai" viewBox="0 0 1024 1024" fill="currentColor" ><path d="M854.600 289.100a362.490 362.490 0 0 0-79.900-115.700 370.830 370.830 0 0 0-118.200-77.800C610.700 76.600 562.100 67 512 67c-50.100 0-98.700 9.600-144.500 28.500-44.300 18.300-84 44.500-118.200 77.800A363.600 363.600 0 0 0 169.400 289c-19.500 45-29.400 92.800-29.400 142 0 70.600 16.900 140.900 50.100 208.700 26.700 54.500 64 107.600 111 158.100 80.300 86.200 164.500 138.900 188.400 153a43.900 43.900 0 0 0 22.400 6.100c7.800 0 15.500-2 22.400-6.100 23.900-14.100 108.100-66.800 188.400-153 47-50.400 84.300-103.600 111-158.100C867.100 572 884 501.800 884 431.100c0-49.200-9.900-97-29.400-142zM512 880.200c-65.900-41.900-300-207.800-300-449.100 0-77.900 31.100-151.100 87.600-206.300C356.300 169.500 431.700 139 512 139s155.700 30.500 212.400 85.900C780.900 280 812 353.200 812 431.100c0 241.300-234.100 407.200-300 449.100zm0-617.200c-97.200 0-176 78.800-176 176s78.800 176 176 176 176-78.800 176-176-78.800-176-176-176zm79.200 255.200A111.600 111.600 0 0 1 512 551c-29.900 0-58-11.700-79.200-32.800A111.600 111.600 0 0 1 400 439c0-29.900 11.700-58 32.800-79.200C454 338.600 482.100 327 512 327c29.900 0 58 11.600 79.200 32.800C612.400 381 624 409.100 624 439c0 29.900-11.600 58-32.800 79.200z"/></svg><span>环境管理</span></div><div class="si" style="top:685px"><svg class="ai" viewBox="0 0 1024 1024" fill="none" stroke="currentColor" stroke-width="72" stroke-linecap="butt" stroke-linejoin="miter"><rect x="244" y="194" width="524" height="237" stroke-width="66"/><circle cx="377" cy="313" r="38" fill="currentColor" stroke="none"/><path d="M512 464 V557 M206 660 V557 H823 V660" stroke-width="60"/><rect x="159" y="687" width="94" height="149" stroke-width="60"/><rect x="465" y="687" width="94" height="149" stroke-width="60"/><rect x="776" y="687" width="94" height="149" stroke-width="60"/></svg><span>集群管理</span></div><div class="si" style="top:781px"><svg class="ai" viewBox="0 0 1024 1024" fill="none" stroke="currentColor" stroke-width="72" stroke-linecap="butt" stroke-linejoin="miter"><path d="M322 740 H250 C 150 740 75 660 75 560 C 75 470 140 395 225 385 C 250 265 370 175 512 175 C 655 175 775 265 800 385 C 885 395 950 470 950 560 C 950 660 875 740 775 740 H707" stroke-width="64"/><rect x="352" y="433" width="325" height="392" stroke-width="60"/><path d="M352 628 H677" stroke-width="56"/><circle cx="450" cy="532" r="32" fill="currentColor" stroke="none"/><circle cx="450" cy="728" r="32" fill="currentColor" stroke="none"/></svg><span>K8S命名空间管理</span></div><div class="si" style="top:877px"><svg class="ai" viewBox="0 0 1024 1024" fill="none" stroke="currentColor" stroke-width="72" stroke-linecap="butt" stroke-linejoin="miter"><path d="M512 100 C 420 165 300 198 160 206 V 560 C 160 740 330 870 512 932 C 694 870 864 740 864 560 V206 C 724 198 604 165 512 100 Z" stroke-width="62" stroke-linejoin="round"/><path d="M335 505 L470 638 L735 398" stroke-width="62"/></svg><span>令牌管理</span></div></div><div id="content"><div id="tbar"></div>
<div class="ncard" id="tool"><div class="btn m" style="left:18px;top:15px;width:152px"><span class="t">创建租户</span></div><div id="kw"><span class="t">请输入关键词</span></div><div class="btn m" style="left:3114px;top:15px;width:68px"><svg class="ai" viewBox="0 0 1024 1024" fill="currentColor" style="position:absolute;left:19px;top:13px;width:30px;height:30px;color:#aebccd"><path d="M909.600 854.500L649.900 594.800C690.200 542.700 712 479 712 412c0-80.200-31.300-155.400-87.900-212.100-56.600-56.700-132-87.900-212.100-87.900s-155.500 31.300-212.100 87.900C143.200 256.500 112 331.800 112 412c0 80.100 31.300 155.500 87.900 212.100C256.500 680.800 331.800 712 412 712c67 0 130.600-21.800 182.700-62l259.700 259.600a8.200 8.200 0 0 0 11.600 0l43.600-43.500a8.200 8.200 0 0 0 0-11.600zM570.400 570.400C528 612.700 471.800 636 412 636s-116-23.300-158.400-65.600C211.300 528 188 471.800 188 412s23.300-116.100 65.600-158.400C296 211.300 352.200 188 412 188s116.100 23.200 158.400 65.600S636 352.200 636 412s-23.300 116.100-65.600 158.400z"/></svg></div></div>
<div class="ncard" id="list"><div id="ltitle">租户管理</div><div id="lhr"></div><table><colgroup><col style="width:4.9505%"><col style="width:11.8812%"><col style="width:17.8218%"><col style="width:19.8020%"><col style="width:17.8218%"><col style="width:17.8218%"><col style="width:9.9010%"></colgroup><thead><tr><th><span class="t">#</span></th><th><span class="t">操作系统租户</span></th><th><span class="t">描述</span></th><th><span class="t">队列</span></th><th><span class="t">创建时间</span></th><th><span class="t">更新时间</span></th><th><span class="t">操作</span></th></tr></thead><tbody><tr><td class=""><span class="t">1</span></td><td class=""><span class="t">root</span></td><td class=""><span class="t"></span></td><td class=""><span class="t">root</span></td><td class="dt"><span class="t">2025-03-26 14:28:12</span></td><td class="dt"><span class="t">2025-03-26 14:28:12</span></td><td><div class="cb" style="left:26px;background:#2c5fa8"><svg class="ai" viewBox="0 0 1024 1024" fill="currentColor" ><path d="M257.700 752c2 0 4-.2 6-.5L431.900 722c2-.4 3.900-1.300 5.300-2.800l423.900-423.900a9.960 9.960 0 0 0 0-14.100L694.900 114.900c-1.900-1.900-4.400-2.900-7.100-2.900s-5.200 1-7.100 2.900L256.800 538.800c-1.500 1.500-2.400 3.300-2.800 5.300l-29.500 168.200a33.500 33.500 0 0 0 9.400 29.800c6.600 6.400 14.900 9.900 23.800 9.900zm67.400-174.400L687.800 215l73.300 73.300-362.700 362.600-88.900 15.700 15.600-89zM880 836H144c-17.700 0-32 14.300-32 32v36c0 4.400 3.600 8 8 8h784c4.400 0 8-3.600 8-8v-36c0-17.700-14.300-32-32-32z"/></svg></div><div class="cb" style="left:106px;background:#ac3a35"><svg class="ai" viewBox="0 0 1024 1024" fill="currentColor" ><path d="M360 184h-8c4.400 0 8-3.600 8-8v8h304v-8c0 4.400 3.600 8 8 8h-8v72h72v-80c0-35.300-28.700-64-64-64H352c-35.300 0-64 28.700-64 64v80h72v-72zm504 72H160c-17.700 0-32 14.300-32 32v32c0 4.400 3.600 8 8 8h60.400l24.700 523c1.600 34.100 29.800 61 63.900 61h454c34.200 0 62.300-26.800 63.900-61l24.700-523H888c4.400 0 8-3.600 8-8v-32c0-17.700-14.300-32-32-32zM731.300 840H292.700l-24.200-512h487l-24.200 512z"/></svg></div></td></tr><tr><td class=""><span class="t">2</span></td><td class=""><span class="t">hadoop</span></td><td class=""><span class="t">hadoop租户</span></td><td class=""><span class="t">hadoop</span></td><td class="dt"><span class="t">2025-03-25 17:47:05</span></td><td class="dt"><span class="t">2025-03-25 17:47:05</span></td><td><div class="cb" style="left:26px;background:#2c5fa8"><svg class="ai" viewBox="0 0 1024 1024" fill="currentColor" ><path d="M257.700 752c2 0 4-.2 6-.5L431.900 722c2-.4 3.900-1.300 5.300-2.800l423.900-423.900a9.960 9.960 0 0 0 0-14.100L694.900 114.900c-1.900-1.900-4.400-2.900-7.100-2.900s-5.200 1-7.100 2.900L256.800 538.800c-1.500 1.500-2.400 3.300-2.800 5.300l-29.500 168.200a33.500 33.500 0 0 0 9.400 29.800c6.600 6.400 14.900 9.900 23.800 9.900zm67.400-174.400L687.800 215l73.300 73.300-362.700 362.600-88.900 15.700 15.600-89zM880 836H144c-17.700 0-32 14.300-32 32v36c0 4.400 3.600 8 8 8h784c4.400 0 8-3.600 8-8v-36c0-17.700-14.300-32-32-32z"/></svg></div><div class="cb" style="left:106px;background:#ac3a35"><svg class="ai" viewBox="0 0 1024 1024" fill="currentColor" ><path d="M360 184h-8c4.400 0 8-3.600 8-8v8h304v-8c0 4.400 3.600 8 8 8h-8v72h72v-80c0-35.300-28.700-64-64-64H352c-35.300 0-64 28.700-64 64v80h72v-72zm504 72H160c-17.700 0-32 14.300-32 32v32c0 4.400 3.600 8 8 8h60.400l24.700 523c1.600 34.100 29.800 61 63.900 61h454c34.200 0 62.300-26.800 63.900-61l24.700-523H888c4.400 0 8-3.600 8-8v-32c0-17.700-14.300-32-32-32zM731.300 840H292.700l-24.200-512h487l-24.200 512z"/></svg></div></td></tr><tr><td class=""><span class="t">3</span></td><td class=""><span class="t">default</span></td><td class=""><span class="t"></span></td><td class=""><span class="t">default</span></td><td class="dt"><span class="t">2025-03-23 21:58:30</span></td><td class="dt"><span class="t">2025-03-23 21:58:30</span></td><td><div class="cb" style="left:26px;background:#2c5fa8"><svg class="ai" viewBox="0 0 1024 1024" fill="currentColor" ><path d="M257.700 752c2 0 4-.2 6-.5L431.900 722c2-.4 3.900-1.300 5.300-2.800l423.900-423.900a9.960 9.960 0 0 0 0-14.100L694.900 114.900c-1.900-1.900-4.400-2.900-7.100-2.900s-5.200 1-7.100 2.900L256.800 538.800c-1.500 1.500-2.400 3.300-2.800 5.300l-29.500 168.200a33.500 33.500 0 0 0 9.400 29.800c6.600 6.400 14.900 9.900 23.800 9.900zm67.400-174.400L687.800 215l73.300 73.300-362.700 362.600-88.900 15.700 15.600-89zM880 836H144c-17.700 0-32 14.300-32 32v36c0 4.400 3.600 8 8 8h784c4.400 0 8-3.600 8-8v-36c0-17.700-14.300-32-32-32z"/></svg></div><div class="cb" style="left:106px;background:#ac3a35"><svg class="ai" viewBox="0 0 1024 1024" fill="currentColor" ><path d="M360 184h-8c4.400 0 8-3.600 8-8v8h304v-8c0 4.400 3.600 8 8 8h-8v72h72v-80c0-35.300-28.700-64-64-64H352c-35.300 0-64 28.700-64 64v80h72v-72zm504 72H160c-17.700 0-32 14.300-32 32v32c0 4.400 3.600 8 8 8h60.400l24.700 523c1.600 34.100 29.800 61 63.900 61h454c34.200 0 62.300-26.800 63.900-61l24.700-523H888c4.400 0 8-3.600 8-8v-32c0-17.700-14.300-32-32-32zM731.300 840H292.700l-24.200-512h487l-24.200 512z"/></svg></div></td></tr></tbody></table><div style="position:absolute;left:1306px;top:554px;width:56px;height:56px;line-height:56px;text-align:center;color:#c2c2c2"><span class="t">&lt;</span></div><div style="position:absolute;left:1370px;top:554px;width:56px;height:56px;line-height:52px;text-align:center;color:#4088f5;border:2px solid #4088f5;border-radius:6px"><span class="t">1</span></div><div style="position:absolute;left:1434px;top:554px;width:56px;height:56px;line-height:56px;text-align:center;color:#c2c2c2"><span class="t">&gt;</span></div><div style="position:absolute;left:1506px;top:554px;width:178px;height:56px;line-height:52px;padding-left:20px;border:2px solid #e0e0e6;border-radius:6px"><span class="t">10 / 页</span></div><div style="position:absolute;left:1701px;top:554px;height:56px;line-height:60px;color:#333639"><span class="t">跳至</span></div><div style="position:absolute;left:1773px;top:554px;width:120px;height:56px;line-height:54px;padding-left:17px;border:2px solid #e0e0e6;border-radius:6px;color:#333639"><span class="t">1</span></div></div>
</div></div>
<div id="footer">© 2019-2025 杭州奥零数据科技有限公司 <a>GPL-3.0 License</a></div>
<div id="mask"></div>
<div id="modal"><div id="mtitle">创建租户</div>
<div class="lab" style="top:138px"><b>*</b>操作系统租户</div>
<div class="inp" style="top:186px;height:56px;line-height:55px;border-color:#559df2;box-shadow:0 0 0 4px rgba(64,136,245,.2)"><span class="t">请输入操作系统租户</span></div>
<div class="lab" style="top:290px"><b>*</b>队列</div>
<div class="inp" style="top:338px;height:56px;line-height:55px;color:#333639;padding-left:21px;letter-spacing:.8px"><span class="t">default</span><svg viewBox="0 0 16 16" style="position:absolute;right:17px;top:13px;width:28px;height:28px" fill="none" stroke="#c2c2c2" stroke-width="1.200"><polyline points="2.500,5.500 8,11 13.500,5.500"/></svg></div>
<div class="lab" style="top:442px">描述</div>
<div class="inp" style="top:490px;height:147px;line-height:45px;padding-top:9px"><span class="t">请输入描述</span><svg viewBox="0 0 20 20" style="position:absolute;right:0;bottom:0;width:20px;height:20px" stroke="#555" stroke-width="1.500"><path d="M5 19 L19 5 M12 19 L19 12"/></svg></div>
<div style="position:absolute;left:934px;top:726px;width:96px;height:56px;line-height:60px;text-align:center;font-size:28px;color:#333639"><span class="t">取消</span></div>
<div class="btn" style="left:1054px;top:726px;width:96px"><span class="t">确定</span></div>
</div>
<div id="wm">掘金技术社区 @ 杭州奥零数据科技</div>
<script>(function(){var w=window.innerWidth;if(w&&Math.abs(w-4480)>2){document.body.style.zoom=w/4480;}})();</script>
</body></html>
